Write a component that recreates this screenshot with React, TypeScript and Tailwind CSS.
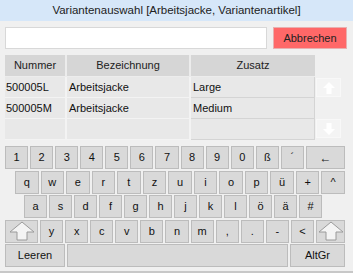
import React from 'react'

const font = { fontFamily: '"Liberation Sans", Arial, sans-serif' }

function ShiftIcon() {
  return (
    <svg width="26" height="20" viewBox="0 0 26 20">
      <path d="M13 1 L25 11 L18 11 L18 19 L8 19 L8 11 L1 11 Z" fill="#f4f4f4" stroke="#9a9a9a" strokeWidth="1" />
    </svg>
  )
}

function ScrollArrow({ down }: { down?: boolean }) {
  return (
    <svg width="12" height="12" viewBox="0 0 12 12" style={{ transform: down ? 'rotate(180deg)' : undefined }}>
      <path d="M6 0 L12 6 L8.5 6 L8.5 12 L3.5 12 L3.5 6 L0 6 Z" fill="#ffffff" />
    </svg>
  )
}

function Key({ children, className = '' }: { children?: React.ReactNode; className?: string }) {
  return (
    <div className={`h-[23px] flex items-center justify-center bg-[#d9d9d9] border border-[#bcbcbc] text-[11px] text-[#111] ${className}`}>
      {children}
    </div>
  )
}

const rows = [
  ['500005L', 'Arbeitsjacke', 'Large'],
  ['500005M', 'Arbeitsjacke', 'Medium'],
  ['', '', ''],
]

export default function App() {
  const r1 = ['1', '2', '3', '4', '5', '6', '7', '8', '9', '0', 'ß', '´']
  const r2 = ['q', 'w', 'e', 'r', 't', 'z', 'u', 'i', 'o', 'p', 'ü', '+', '^']
  const r3 = ['a', 's', 'd', 'f', 'g', 'h', 'j', 'k', 'l', 'ö', 'ä', '#']
  const r4 = ['y', 'x', 'c', 'v', 'b', 'n', 'm', ',', '.', '-', '<']

  return (
    <div style={font} className="w-[353px] h-[273px] bg-[#f0f0f0] flex flex-col overflow-hidden border-b-2 border-[#c8c8c8]">
      {/* Title */}
      <div className="h-[21px] bg-[#d6e7f9] flex items-center justify-center text-[11.5px] text-[#222]">
        Variantenauswahl [Arbeitsjacke, Variantenartikel]
      </div>

      {/* Search + cancel */}
      <div className="flex mt-[6px] px-[5px] gap-[6px]">
        <div className="w-[262px] h-[22px] bg-white border border-[#d8d8d8]" />
        <div className="w-[74px] h-[22px] bg-[#ff6868] border border-[#e8b0b0] flex items-center justify-center text-[11px] text-[#222]">
          Abbrechen
        </div>
      </div>

      {/* Table */}
      <div className="flex mt-[6px] px-[5px]">
        <div className="w-[310px] flex flex-col">
          <div className="flex h-[22px]">
            <div className="w-[62px] bg-[#d6d6d6] border-r-2 border-b border-[#ececec] flex items-center justify-center text-[11px] text-[#222]">Nummer</div>
            <div className="w-[124px] bg-[#d6d6d6] border-r-2 border-b border-[#ececec] flex items-center justify-center text-[11px] text-[#222]">Bezeichnung</div>
            <div className="flex-1 bg-[#d6d6d6] border-b border-[#ececec] flex items-center justify-center text-[11px] text-[#222]">Zusatz</div>
          </div>
          {rows.map((r, i) => (
            <div key={i} className="flex h-[21px]">
              <div className="w-[62px] bg-[#e8e8e8] border-r-2 border-b border-[#f3f3f3] flex items-center pl-[1px] text-[11px] text-[#111]">{r[0]}</div>
              <div className="w-[124px] bg-[#e8e8e8] border-r-2 border-b border-[#f3f3f3] flex items-center pl-[2px] text-[11px] text-[#111]">{r[1]}</div>
              <div className="flex-1 bg-[#e8e8e8] border-r border-b border-[#d4d4d4] flex items-center pl-[2px] text-[11px] text-[#111]">{r[2]}</div>
            </div>
          ))}
        </div>
        <div className="w-[25px] ml-[1px] flex flex-col pt-[23px]">
          <div className="h-[19px] bg-[#f4f4f4] border border-[#f8f8f8] flex items-center justify-center">
            <ScrollArrow />
          </div>
          <div className="h-[22px]" />
          <div className="h-[19px] bg-[#f4f4f4] border border-[#f8f8f8] flex items-center justify-center">
            <ScrollArrow down />
          </div>
        </div>
      </div>

      {/* Keyboard */}
      <div className="flex flex-col gap-[1.5px] mt-[6px] px-[5px] pr-[8px]">
        <div className="flex gap-[2px]">
          {r1.map(k => <Key key={k} className="flex-1">{k}</Key>)}
          <Key className="w-[39px] text-[12px]">←</Key>
        </div>
        <div className="flex gap-[2px] pl-[10px]">
          {r2.map(k => <Key key={k} className="flex-1">{k}</Key>)}
        </div>
        <div className="flex gap-[2px] pl-[19px] pr-[23px]">
          {r3.map(k => <Key key={k} className="flex-1">{k}</Key>)}
        </div>
        <div className="flex gap-[2px]">
          <Key className="w-[33px]"><ShiftIcon /></Key>
          {r4.map(k => <Key key={k} className="flex-1">{k}</Key>)}
          <Key className="w-[29px]"><ShiftIcon /></Key>
        </div>
        <div className="flex gap-[2px]">
          <Key className="w-[60px]">Leeren</Key>
          <Key className="flex-1" />
          <Key className="w-[55px]">AltGr</Key>
        </div>
      </div>
    </div>
  )
}
